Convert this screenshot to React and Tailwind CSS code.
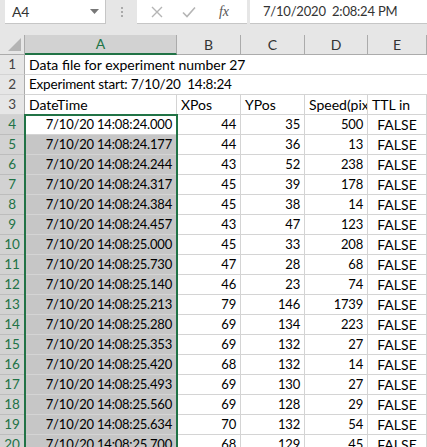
import React from "react";

const rows = [
  ["24.000", 44, 35, 500],
  ["24.177", 44, 36, 13],
  ["24.244", 43, 52, 238],
  ["24.317", 45, 39, 178],
  ["24.384", 45, 38, 14],
  ["24.457", 43, 47, 123],
  ["25.000", 45, 33, 208],
  ["25.730", 47, 28, 68],
  ["25.140", 46, 23, 74],
  ["25.213", 79, 146, 1739],
  ["25.280", 69, 134, 223],
  ["25.353", 69, 132, 27],
  ["25.420", 68, 132, 14],
  ["25.493", 69, 130, 27],
  ["25.560", 69, 128, 29],
  ["25.634", 70, 132, 54],
  ["25.700", 68, 129, 45],
];

const grid = "grid grid-cols-[25px_152px_64px_64px_63px_1fr]";

function RowHead({ n, sel }) {
  return (
    <div
      className={
        "flex h-5 items-center justify-center border-b border-r text-[13.5px] " +
        (sel
          ? "border-b-[#bdbdbd] border-r-[#217346] bg-[#d2d2d2] text-[#217346]"
          : "border-b-[#d4d4d4] border-r-[#ababab] bg-[#e6e6e6] text-[#444]")
      }
    >
      {n}
    </div>
  );
}

function Cell({ children, className = "" }) {
  return (
    <div
      className={
        "flex h-5 items-center overflow-hidden whitespace-nowrap border-b border-r border-[#d4d4d4] px-[4px] " +
        className
      }
    >
      {children}
    </div>
  );
}

export default function App() {
  return (
    <div
      className="h-[447px] w-[427px] overflow-hidden bg-white text-[13px] leading-none tracking-[-0.2px] text-black"
      style={{ fontFamily: "Lato, 'Open Sans', sans-serif" }}
    >
      {/* formula bar */}
      <div className="flex h-[35px] items-start bg-[#e6e6e6]">
        <div className="ml-[5px] flex h-6 w-[101px] items-center justify-between border-b border-r border-[#c6c6c6] bg-white pl-[7px] pr-[6px] text-[14px] text-[#333]">
          <span>A4</span>
          <svg width="9" height="5" viewBox="0 0 9 5">
            <path d="M0 0h9L4.5 5z" fill="#777" />
          </svg>
        </div>
        <div className="flex h-6 w-[31px] flex-col items-center justify-center gap-[2px]">
          <span className="h-[2px] w-[2px] bg-[#aaa]" />
          <span className="h-[2px] w-[2px] bg-[#aaa]" />
          <span className="h-[2px] w-[2px] bg-[#aaa]" />
        </div>
        <div className="flex h-6 w-[110px] items-center border-b border-[#c6c6c6] bg-white">
          <svg width="12" height="12" viewBox="0 0 12 12" className="ml-[14px]">
            <path d="M1 1l10 10M11 1L1 11" stroke="#b5b5b5" strokeWidth="1.4" />
          </svg>
          <svg width="14" height="12" viewBox="0 0 14 12" className="ml-[19px]">
            <path d="M1 6.5l4 4L13 1.5" fill="none" stroke="#b5b5b5" strokeWidth="1.6" />
          </svg>
          <span
            className="ml-[23px] text-[14px] italic text-[#555]"
            style={{ fontFamily: "'Liberation Serif', serif" }}
          >
            fx
          </span>
        </div>
        <div className="ml-[3px] flex h-6 flex-1 items-center whitespace-pre border-b border-[#c6c6c6] bg-white pl-[13px] text-[13px] text-[#333]">
          {"7/10/2020  2:08:24 PM"}
        </div>
      </div>

      {/* column headers */}
      <div className={grid + " h-5 bg-[#e6e6e6] text-[14px] tracking-normal text-[#333]"}>
        <div className="relative border-b border-r border-[#ababab]">
          <svg width="13" height="13" viewBox="0 0 13 13" className="absolute bottom-[3px] right-[3px]">
            <path d="M13 0V13H0z" fill="#b4b4b4" />
          </svg>
        </div>
        <div className="flex items-center justify-center border-b-2 border-r border-b-[#217346] border-r-[#ababab] bg-[#d2d2d2] text-[#217346]">
          A
        </div>
        {["B", "C", "D", "E"].map((c) => (
          <div key={c} className="flex items-center justify-center border-b border-r border-[#ababab]">
            {c}
          </div>
        ))}
      </div>

      <div className={grid}>
        <RowHead n={1} />
        <Cell className="col-span-5 border-r-0 text-[14px] tracking-normal">
          Data file for experiment number 27
        </Cell>
        <RowHead n={2} />
        <Cell className="col-span-5 whitespace-pre border-r-0 text-[13.5px]">
          {"Experiment start: 7/10/20  14:8:24"}
        </Cell>
        <RowHead n={3} />
        <Cell className="text-[14px] tracking-normal">DateTime</Cell>
        <Cell className="text-[14px] tracking-normal">XPos</Cell>
        <Cell className="text-[14px] tracking-normal">YPos</Cell>
        <Cell className="pr-0 text-[14px] tracking-normal">Speed(pixels/s)</Cell>
        <Cell className="text-[14px] tracking-normal">TTL in</Cell>
      </div>

      <div className={grid + " relative"}>
        {rows.map((r, i) => (
          <React.Fragment key={i}>
            <RowHead n={i + 4} sel />
            <Cell className={"justify-end " + (i === 0 ? "bg-white" : "bg-[#c6c6c6]")}>
              7/10/20 14:08:{r[0]}
            </Cell>
            <Cell className="justify-end">{r[1]}</Cell>
            <Cell className="justify-end">{r[2]}</Cell>
            <Cell className="justify-end">{r[3]}</Cell>
            <Cell className="justify-center text-[14px] tracking-normal">FALSE</Cell>
          </React.Fragment>
        ))}
        <div className="pointer-events-none absolute left-[24px] top-[-1px] h-[400px] w-[154px] border-2 border-[#217346]" />
      </div>
    </div>
  );
}
